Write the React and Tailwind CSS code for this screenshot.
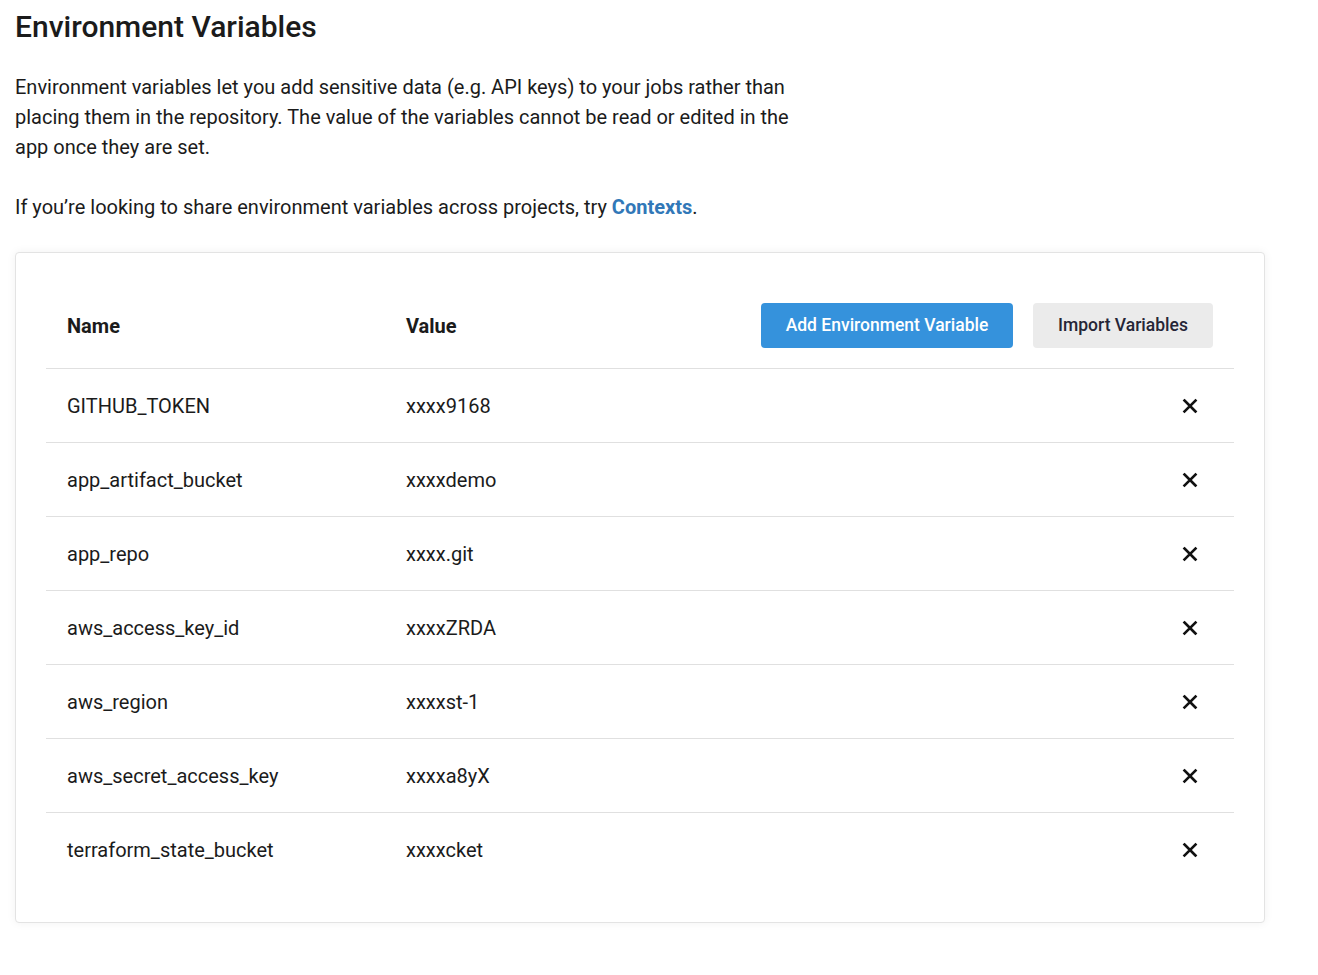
import React from 'react';

const rows = [
  ['GITHUB_TOKEN', 'xxxx9168'],
  ['app_artifact_bucket', 'xxxxdemo'],
  ['app_repo', 'xxxx.git'],
  ['aws_access_key_id', 'xxxxZRDA'],
  ['aws_region', 'xxxxst-1'],
  ['aws_secret_access_key', 'xxxxa8yX'],
  ['terraform_state_bucket', 'xxxxcket'],
];

const CloseIcon = () => (
  <svg width="16" height="16" viewBox="0 0 16 16" fill="none" stroke="#111" strokeWidth="2.6" strokeLinecap="square">
    <path d="M2.5 2.5l11 11M13.5 2.5l-11 11" />
  </svg>
);

const App = () => (
  <div className="min-h-screen bg-white px-[15px] pt-[8px] font-['Roboto',sans-serif] text-[#1b1b1b]">
    <h1 className="text-[30px] font-medium leading-[38px]">Environment Variables</h1>
    <p className="mt-[26px] max-w-[800px] text-[20px] leading-[30px]">
      Environment variables let you add sensitive data (e.g. API keys) to your jobs rather than placing them in the
      repository. The value of the variables cannot be read or edited in the app once they are set.
    </p>
    <p className="mt-[30px] text-[20px] leading-[30px]">
      If you’re looking to share environment variables across projects, try{' '}
      <a className="font-bold text-[#3178b8]">Contexts</a>.
    </p>

    <div className="mt-[30px] w-[1250px] rounded-[4px] border border-[#e3e3e3] bg-white px-[30px] pt-[50px] pb-[35px] shadow-[0_0_10px_rgba(0,0,0,0.06)]">
      <div className="flex h-[66px] items-start border-b border-[#e0e0e0] px-[21px]">
        <div className="flex h-[45px] w-[339px] items-center text-[20px] font-bold">Name</div>
        <div className="flex h-[45px] flex-1 items-center text-[20px] font-bold">Value</div>
        <div className="flex gap-[20px]">
          <button className="h-[45px] w-[252px] rounded-[4px] bg-[#3592dc] text-[17.5px] font-medium text-white">
            Add Environment Variable
          </button>
          <button className="h-[45px] w-[180px] rounded-[4px] bg-[#ebebeb] text-[17.5px] font-medium text-[#252536]">
            Import Variables
          </button>
        </div>
      </div>
      {rows.map(([name, value], i) => (
        <div
          key={name}
          className={`flex h-[74px] items-center px-[21px] text-[20px] ${i < rows.length - 1 ? 'border-b border-[#e0e0e0]' : ''}`}
        >
          <div className="w-[339px]">{name}</div>
          <div className="flex-1">{value}</div>
          <div className="mr-[15px]">
            <CloseIcon />
          </div>
        </div>
      ))}
    </div>
  </div>
);

export default App;
